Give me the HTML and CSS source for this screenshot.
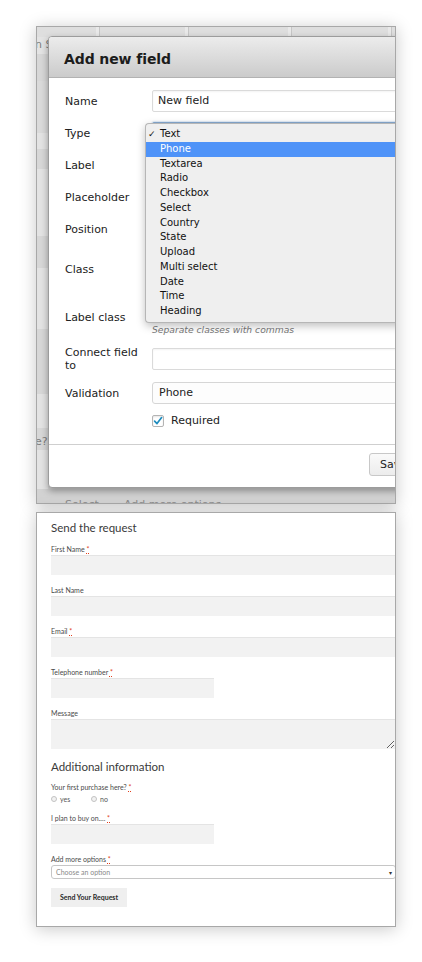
FILE: index.html
```html
<!DOCTYPE html>
<html lang="en">
<head>
<meta charset="utf-8">
<title>Add new field</title>
<link rel="stylesheet" href="styles.css">
</head>
<body>
<div class="page">
  <div class="shot admin">
    <div class="bg-head">
      <span class="hc hc1"></span><span class="hc hc2"></span><span class="hc hc3"></span><span class="hc hc4"></span><span class="hc hc5"></span>
    </div>
    <div class="bg-body">
      <div class="bg-side">
        <div class="r lt h17"><span class="bg-text">n S</span></div>
        <div class="r dk h27"></div>
        <div class="r dk2 h52"></div>
        <div class="r lt h16"></div>
        <div class="r dk h20"></div>
        <div class="r lt h67"></div>
        <div class="r dk h32"></div>
        <div class="r lt h61"></div>
        <div class="r dk h65"></div>
        <div class="r lt h34"></div>
        <div class="r dk h6"></div>
        <div class="r dk h16"><span class="bg-text">e?</span></div>
        <div class="r lt h39"></div>
      </div>
    </div>
    <div class="bg-foot"><span>Select</span><span>Add more options</span></div>

    <div class="modal">
      <div class="modal-head">Add new field</div>
      <div class="modal-body">
        <div class="lbl">Name</div>
        <div class="inp">New field</div>

        <div class="lbl">Type</div>
        <div class="inp inp-focus"></div>

        <div class="lbl">Label</div>
        <div class="inp"></div>

        <div class="lbl">Placeholder</div>
        <div class="inp"></div>

        <div class="lbl">Position</div>
        <div class="inp"></div>

        <div class="lbl">Class</div>
        <div class="stack"><div class="inp"></div><div class="help"></div></div>

        <div class="lbl">Label class</div>
        <div class="stack"><div class="inp"></div><div class="help">Separate classes with commas</div></div>

        <div class="lbl lbl-2">Connect field<br>to</div>
        <div class="inp"></div>

        <div class="lbl">Validation</div>
        <div class="inp inp-select">Phone</div>

        <div class="check-row">
          <span class="checkbox"><svg width="10" height="10" viewBox="0 0 10 10"><path d="M1.6 5.2 L4 7.6 L8.6 1.6" fill="none" stroke="#1e8cbe" stroke-width="1.7" stroke-linecap="round" stroke-linejoin="round"/></svg></span>
          <span>Required</span>
        </div>
      </div>
      <div class="modal-foot"><div class="btn-save">Save</div></div>

      <ul class="dropdown">
        <li><span class="tick">✓</span>Text</li>
        <li class="hl"><span class="tick"></span>Phone</li>
        <li><span class="tick"></span>Textarea</li>
        <li><span class="tick"></span>Radio</li>
        <li><span class="tick"></span>Checkbox</li>
        <li><span class="tick"></span>Select</li>
        <li><span class="tick"></span>Country</li>
        <li><span class="tick"></span>State</li>
        <li><span class="tick"></span>Upload</li>
        <li><span class="tick"></span>Multi select</li>
        <li><span class="tick"></span>Date</li>
        <li><span class="tick"></span>Time</li>
        <li><span class="tick"></span>Heading</li>
      </ul>
    </div>
  </div>

  <div class="shot form">
    <h3 class="form-title">Send the request</h3>
    <div class="fields">
      <div class="grp"><label class="flbl">First Name <abbr class="req">*</abbr></label><div class="fin"></div></div>
      <div class="grp"><label class="flbl">Last Name</label><div class="fin"></div></div>
      <div class="grp"><label class="flbl">Email <abbr class="req">*</abbr></label><div class="fin"></div></div>
      <div class="grp"><label class="flbl">Telephone number <abbr class="req">*</abbr></label><div class="fin fin-short"></div></div>
      <div class="grp"><label class="flbl">Message</label><textarea class="fta"></textarea></div>
    </div>
    <h3 class="form-sub">Additional information</h3>
    <div class="fields">
      <div class="grp grp-radio">
        <label class="flbl">Your first purchase here? <abbr class="req">*</abbr></label>
        <div class="radios">
          <span class="radio"></span><span class="rtxt">yes</span>
          <span class="radio"></span><span class="rtxt">no</span>
        </div>
      </div>
      <div class="grp"><label class="flbl">I plan to buy on.... <abbr class="req">*</abbr></label><div class="fin fin-short"></div></div>
      <div class="grp grp-last"><label class="flbl">Add more options <abbr class="req">*</abbr></label><div class="fsel"><span>Choose an option</span><span class="arr">▾</span></div></div>
    </div>
    <div class="fbtn">Send Your Request</div>
  </div>
</div>
</body>
</html>
```

FILE: styles.css
```css
html, body { margin: 0; padding: 0; background: #fff; }
body { width: 422px; height: 962px; overflow: hidden; font-family: "DejaVu Sans", sans-serif; }

.page {
  padding: 26px 0 0 36px;
  display: flex;
  flex-direction: column;
  gap: 8px;
}

.shot {
  box-sizing: border-box;
  width: 360px;
  border: 1px solid #a8a8a8;
  box-shadow: 0 2px 16px rgba(0,0,0,.22);
  overflow: hidden;
  position: relative;
}

/* ---------- top screenshot ---------- */
.admin {
  height: 478px;
  background: #d8d8d8;
  display: flex;
  flex-direction: column;
}
.bg-head {
  height: 10px;
  flex: none;
  display: flex;
  background: #dedede;
}
.hc { height: 10px; border-right: 1px solid #c6c6c6; box-shadow: inset -3px 0 0 #e9e9e9; box-sizing: border-box; }
.hc1 { width: 63px; }
.hc2 { width: 89px; }
.hc3 { width: 103px; }
.hc4 { width: 100px; }
.hc5 { flex: 1; border-right: none; box-shadow: none; }

.bg-body { flex: 1; display: flex; }
.bg-side { width: 11px; display: flex; flex-direction: column; }
.r { flex: none; overflow: visible; white-space: nowrap; }
.lt { background: #e3e3e3; }
.dk { background: #d7d7d7; }
.dk2 { background: #dadada; }
.h6 { height: 6px; } .h16 { height: 16px; } .h17 { height: 17px; } .h20 { height: 20px; }
.h27 { height: 27px; } .h32 { height: 32px; } .h34 { height: 34px; } .h39 { height: 39px; }
.h52 { height: 52px; } .h61 { height: 61px; } .h65 { height: 65px; } .h67 { height: 67px; }
.bg-text {
  display: block;
  margin-left: -2px;
  font-size: 11px;
  line-height: 16px;
  color: #7c7c7c;
}
.bg-foot {
  flex: none;
  height: 14px;
  overflow: hidden;
  background: #d2d2d2;
  padding: 9px 0 0 28px;
  box-sizing: border-box;
  display: flex;
  gap: 25px;
  font-size: 11px;
  line-height: 14px;
  color: #8a8a8a;
}

.modal {
  position: absolute;
  left: 11px;
  top: 9px;
  width: 384px;
  height: 452px;
  box-sizing: border-box;
  background: #fff;
  border: 1px solid #9c9c9c;
  border-radius: 4px 0 0 4px;
  box-shadow: 0 3px 7px rgba(0,0,0,.35);
  display: flex;
  flex-direction: column;
}
.modal-head {
  height: 41px;
  flex: none;
  box-sizing: border-box;
  padding: 4px 15px 0;
  display: flex;
  align-items: center;
  background: linear-gradient(#ececec, #cbcbcb);
  border-bottom: 1px solid #b2b2b2;
  border-radius: 3px 0 0 0;
  font-weight: bold;
  font-size: 14px;
  letter-spacing: -0.1px;
  color: #1c1c1c;
}
.modal-body {
  padding: 12px 16px 16px 16px;
  display: grid;
  grid-template-columns: 87px 1fr;
  row-gap: 10px;
  align-items: center;
  font-size: 11px;
  line-height: 14px;
  color: #222;
}
.lbl { white-space: nowrap; padding-top: 1px; }
.lbl-2 { line-height: 13px; padding-top: 0; }
.inp {
  height: 22px;
  box-sizing: border-box;
  border: 1px solid #dadada;
  border-radius: 2px;
  padding: 0 5px;
  display: flex;
  align-items: center;
  box-shadow: inset 0 1px 2px rgba(0,0,0,.05);
  color: #222;
}
.inp-focus { border-color: #86a9cf; box-shadow: 0 0 2px #8ab0d8; }
.inp-select { border-color: #d6d6d6; border-radius: 3px; padding-left: 6px; box-shadow: none; background: #fdfdfd; }
.stack { display: flex; flex-direction: column; }
.help {
  margin-top: 3px;
  height: 13px;
  font-style: italic;
  font-size: 9.2px;
  line-height: 13px;
  color: #777;
  white-space: nowrap;
}
.check-row {
  grid-column: 2;
  display: flex;
  align-items: center;
  gap: 7px;
  height: 14px;
}
.checkbox {
  width: 12px;
  height: 12px;
  box-sizing: border-box;
  border: 1px solid #b4b4b4;
  border-radius: 2px;
  background: #fff;
  box-shadow: inset 0 1px 2px rgba(0,0,0,.1);
  display: flex;
  align-items: center;
  justify-content: center;
}
.modal-foot {
  border-top: 1px solid #cfcfcf;
  padding: 8px 16px 0;
  display: flex;
  justify-content: flex-end;
}
.btn-save {
  height: 23px;
  width: 46px;
  box-sizing: border-box;
  border: 1px solid #c8c8c8;
  border-radius: 3px;
  background: linear-gradient(#fafafa, #ececec);
  font-size: 11px;
  line-height: 21px;
  padding-left: 10px;
  color: #222;
}

.dropdown {
  position: absolute;
  left: 96px;
  top: 86px;
  width: 300px;
  margin: 0;
  padding: 3px 0;
  list-style: none;
  background: #efefef;
  border: 1px solid #b6b6b6;
  border-right: none;
  border-radius: 4px 0 0 4px;
  box-shadow: 0 3px 8px rgba(0,0,0,.25);
  font-size: 10px;
  color: #111;
}
.dropdown li {
  height: 14.75px;
  line-height: 14.75px;
  padding-left: 2px;
  white-space: nowrap;
}
.dropdown li.hl { background: #4f93f8; color: #fff; }
.tick { display: inline-block; width: 12px; font-size: 9px; }

/* ---------- bottom screenshot ---------- */
.form {
  height: 415px;
  background: #fff;
  padding: 8px 0 0 14px;
  font-family: Lato, "Open Sans", sans-serif;
}
.form-title {
  margin: 0;
  font-weight: 400;
  font-size: 11.5px;
  line-height: 14px;
  color: #3a3a3a;
}
.fields { display: flex; flex-direction: column; gap: 11px; }
.form-title + .fields { margin-top: 9.5px; }
.grp { display: flex; flex-direction: column; gap: 1px; }
.flbl {
  font-size: 7px;
  line-height: 9px;
  color: #4a4a4a;
  white-space: nowrap;
}
.req {
  color: #e2401c;
  text-decoration: underline dotted;
  border: none;
}
.fin {
  width: 360px;
  height: 20px;
  background: #f2f2f2;
  box-shadow: inset 0 1px 0 #e4e4e4;
}
.fin-short { width: 163px; }
.fta {
  display: block;
  box-sizing: border-box;
  width: 344px;
  height: 30px;
  margin: 0;
  padding: 0;
  border: none;
  background: #f2f2f2;
  box-shadow: inset 0 1px 0 #e4e4e4;
  resize: both;
  outline: none;
}
.form-sub {
  margin: 11px 0 9px;
  font-weight: 400;
  font-size: 11.5px;
  line-height: 14px;
  color: #3a3a3a;
}
.grp-radio { gap: 3.5px; }
.radios { display: flex; align-items: center; height: 8px; }
.radio {
  width: 6px;
  height: 6px;
  box-sizing: border-box;
  border: 1px solid #c2c2c2;
  border-radius: 50%;
  background: #f2f2f2;
}
.rtxt { font-size: 7px; color: #555; margin-left: 3px; width: 31px; }
.fsel {
  width: 345px;
  height: 14px;
  box-sizing: border-box;
  border: 1px solid #c6c6c6;
  border-radius: 3px;
  padding: 0 3px 0 4px;
  display: flex;
  align-items: center;
  justify-content: space-between;
  font-size: 7px;
  color: #8a8a8a;
}
.arr { font-size: 6px; color: #333; }
.fbtn {
  margin-top: 8.5px;
  width: 76px;
  height: 19px;
  background: #efefef;
  font-size: 7px;
  font-weight: 700;
  line-height: 19px;
  text-align: center;
  color: #2a2a2a;
}
```
